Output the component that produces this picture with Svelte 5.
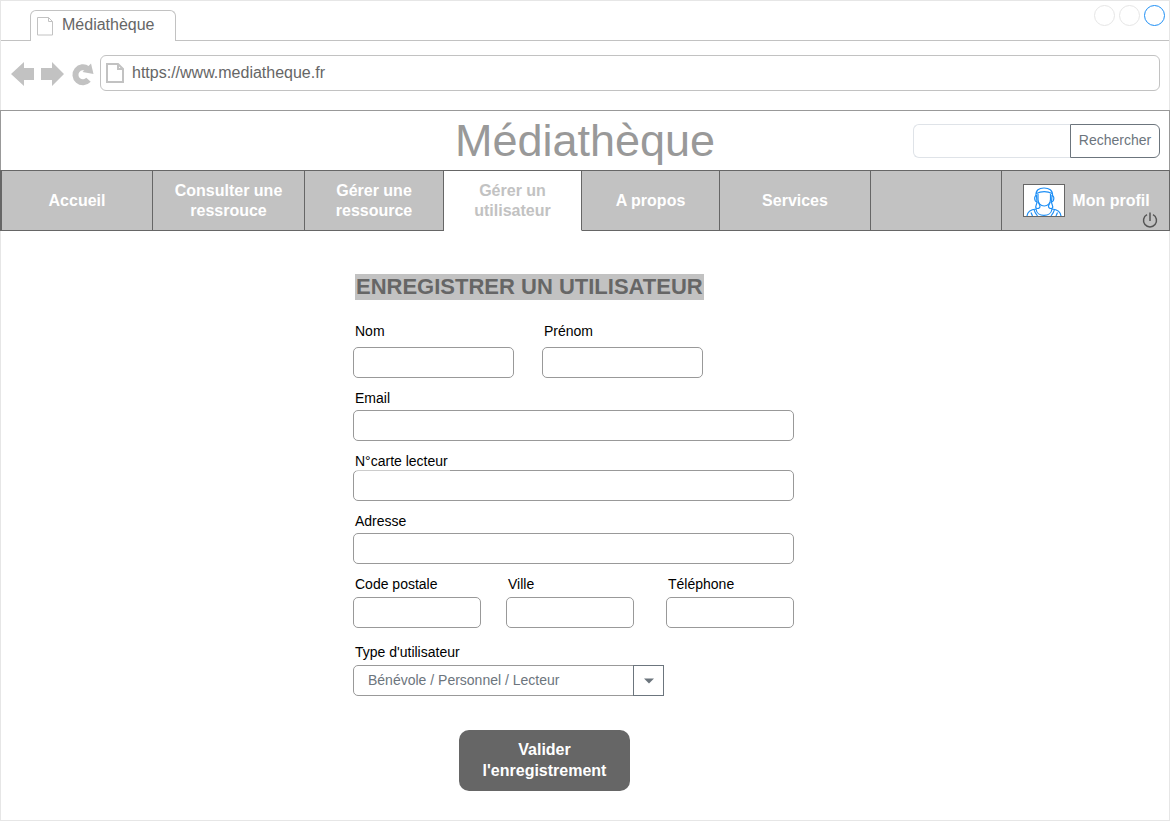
<script>
  const userTypes = ['Bénévole / Personnel / Lecteur', 'Bénévole', 'Personnel', 'Lecteur'];
</script>

<div class="window">
  <div class="tabs">
    <div class="tab">
      <svg width="16" height="20" viewBox="0 0 16 20" aria-hidden="true">
        <path d="M.5 1.5h11l4 4v13.500H.5zM11.500 1.500v4h4" />
      </svg>
      <span>Médiathèque</span>
    </div>
    <div class="controls" aria-hidden="true"><i></i><i></i><i class="active"></i></div>
  </div>

  <div class="toolbar">
    <button class="tool" aria-label="Page précédente">
      <svg width="24" height="26" viewBox="0 0 24 26"><path d="M0 13 13 1v6h10v12H13v6z" /></svg>
    </button>
    <button class="tool" aria-label="Page suivante">
      <svg width="24" height="26" viewBox="0 0 24 26"><path d="M23 13 11 1v6H0v12h11v6z" /></svg>
    </button>
    <button class="tool" aria-label="Actualiser">
      <svg width="23" height="26" viewBox="0 0 23 26">
        <path d="M16.500 7.800A7.500 7.500 0 1 0 17.500 18.800" class="arc" />
        <path d="M20 2.500 22.500 13 11.500 11z" />
      </svg>
    </button>
    <div class="address">
      <svg width="18" height="20" viewBox="0 0 18 20" aria-hidden="true">
        <path d="M1 1h11l5 5v13H1zM12 1v5h5" />
      </svg>
      <input type="text" aria-label="Adresse du site" value="https://www.mediatheque.fr" />
    </div>
  </div>

  <header>
    <h1>Médiathèque</h1>
    <form class="search" role="search">
      <input type="search" aria-label="Rechercher" />
      <button type="button">Rechercher</button>
    </form>
  </header>

  <nav>
    <a href="#accueil">Accueil</a>
    <a href="#consulter">Consulter une<br />ressrouce</a>
    <a href="#ressource">Gérer une<br />ressource</a>
    <a href="#utilisateur" class="current">Gérer un<br />utilisateur</a>
    <a href="#apropos">A propos</a>
    <a href="#services">Services</a>
    <span></span>
    <div class="profile">
      <a href="#profil">
        <svg class="avatar" width="42" height="33" viewBox="0 0 42 33" aria-hidden="true">
          <rect x=".5" y=".5" width="41" height="32" fill="#fff" stroke="#666" />
          <g fill="none" stroke="#1e8ff5" stroke-width="1.200">
            <path d="M13 12C12.500 6 16 4 21 4s9 2 8.500 8M13.500 9.500c4.500-2.500 11-2.500 15.500 0" />
            <path d="M15 10v5.500c0 3.500 2.500 6.500 6.200 6.500s6.300-3 6.300-6.500V10" />
            <path d="M13.500 11.500c-2.500 0-2.500 6 .5 6.500zM29 11.500c2.500 0 2.500 6-.5 6.500z" />
            <path d="M14 18c0 2.500-2 4-1 6 1.500 1 4 .5 4-1.500S15.500 20 15.500 18M28.500 18c0 2.500 2 4 1 6-1.500 1-4 .5-4-1.500s1.500-2.500 1.500-4.500" />
            <path d="M4 32c.5-4.500 3-6.500 9-7 1 8.500 15 8.500 16 0 6 .5 8.500 2.500 9 7" />
            <path d="M11 25.500c.5 2.500 1.500 4 3.500 6.500M31.500 25.500c-.5 2.500-1.500 4-3.500 6.500M8 28.500l1.500 3.500M34.500 28.500l-1.500 3.500" />
          </g>
        </svg>
        <span>Mon profil</span>
      </a>
      <button class="power" aria-label="Déconnexion">
        <svg width="16" height="18" viewBox="0 0 16 18">
          <path d="M5 3.700a6.500 6.500 0 1 0 6 0M8 1.500v8.500" />
        </svg>
      </button>
    </div>
  </nav>

  <main>
    <form class="register">
      <h2>ENREGISTRER UN UTILISATEUR</h2>
      <div class="names">
        <div class="field loose"><label for="nom">Nom</label><input id="nom" type="text" /></div>
        <div class="field loose"><label for="prenom">Prénom</label><input id="prenom" type="text" /></div>
      </div>
      <div class="field"><label for="email">Email</label><input id="email" type="email" /></div>
      <div class="field tight"><label for="carte">N°carte lecteur</label><input id="carte" type="text" /></div>
      <div class="field"><label for="adresse">Adresse</label><input id="adresse" type="text" /></div>
      <div class="contact">
        <div class="field medium"><label for="code">Code postale</label><input id="code" type="text" /></div>
        <div class="field medium"><label for="ville">Ville</label><input id="ville" type="text" /></div>
        <div class="field medium"><label for="tel">Téléphone</label><input id="tel" type="tel" /></div>
      </div>
      <div class="field medium type">
        <label for="type">Type d'utilisateur</label>
        <div class="select">
          <select id="type">
            {#each userTypes as userType}
              <option>{userType}</option>
            {/each}
          </select>
          <span class="arrow" aria-hidden="true">
            <svg width="10" height="6" viewBox="0 0 10 6"><path d="M0 .5h10L5 5.500z" /></svg>
          </span>
        </div>
      </div>
      <button class="submit" type="button">Valider<br />l'enregistrement</button>
    </form>
  </main>
</div>

<style>
  :global(body) {
    margin: 0;
    background: #fff;
  }
  .window,
  .window * {
    box-sizing: border-box;
  }
  .window {
    min-height: 100vh;
    border: 1px solid #e6e6e6;
    font-family: 'Liberation Sans', Arial, sans-serif;
    font-size: 14px;
    color: #000;
  }
  button,
  input,
  select {
    font: inherit;
    margin: 0;
    outline: none;
  }
  a {
    color: inherit;
    text-decoration: none;
  }
  svg {
    display: block;
    flex: none;
  }

  .tabs {
    display: flex;
    justify-content: space-between;
    height: 40px;
    padding: 0 4px 0 29px;
    border-bottom: 1px solid #c2c2c2;
  }
  .tab {
    display: flex;
    align-items: center;
    gap: 9px;
    width: 146px;
    height: 31px;
    margin-top: 9px;
    padding: 0 6px;
    border: 1px solid #c2c2c2;
    border-bottom: 0;
    border-radius: 6px 6px 0 0;
    background: #fff;
    font-size: 16px;
    line-height: 18px;
    color: #666;
  }
  .tab span {
    padding-bottom: 2px;
  }
  .tab svg,
  .address svg {
    fill: none;
    stroke: #c2c2c2;
  }
  .address svg {
    stroke-width: 2;
  }
  .controls {
    display: flex;
    gap: 4px;
    padding-top: 4px;
  }
  .controls i {
    width: 21px;
    height: 21px;
    border: 1px solid #e6e6e6;
    border-radius: 50%;
  }
  .controls .active {
    border-color: #1e8ff5;
  }

  .toolbar {
    display: flex;
    align-items: center;
    gap: 6px;
    height: 69px;
    padding: 0 9px 5px 10px;
  }
  .tool {
    padding: 2px 0 0;
    border: 0;
    background: none;
  }
  .tool svg {
    fill: #c2c2c2;
  }
  .tool .arc {
    fill: none;
    stroke: #c2c2c2;
    stroke-width: 6;
  }
  .address {
    display: flex;
    flex: 1;
    align-items: center;
    gap: 8px;
    height: 36px;
    padding: 0 5px;
    border: 1px solid #c2c2c2;
    border-radius: 6px;
  }
  .address input {
    flex: 1;
    padding: 0;
    border: 0;
    background: none;
    font-size: 16px;
    color: #666;
  }

  header {
    display: grid;
    grid-template-columns: 1fr auto 1fr;
    align-items: center;
    height: 60px;
    margin: 0 -1px;
    padding: 0 9px;
    border: 1px solid #999;
    border-bottom: 0;
  }
  h1 {
    grid-column: 2;
    margin: 0;
    font-size: 45px;
    font-weight: 400;
    line-height: 58px;
    color: #999;
  }
  .search {
    display: flex;
    justify-self: end;
    height: 34px;
  }
  .search input {
    width: 157px;
    padding: 0 8px;
    border: 1px solid #dfe3e8;
    border-right: 0;
    border-radius: 6px 0 0 6px;
    appearance: none;
  }
  .search button {
    width: 90px;
    padding: 0 0 2px;
    border: 1px solid #6c757d;
    border-radius: 0 6px 6px 0;
    background: #fff;
    color: #6c757d;
  }

  nav {
    display: grid;
    grid-template-columns: 151fr 152fr 139fr 138fr 138fr 151fr 131fr 168fr;
    height: 61px;
    margin: 0 -1px;
    border-left: 2px solid #666;
    font-size: 16px;
    font-weight: 700;
    line-height: 20px;
    text-align: center;
    color: #fff;
  }
  nav > * {
    display: flex;
    align-items: center;
    justify-content: center;
    border: solid #666;
    border-width: 1px 1px 1px 0;
    background: #c2c2c2;
  }
  nav .current {
    border-bottom-color: #fff;
    background: #fff;
    color: #c2c2c2;
  }
  .profile {
    position: relative;
    padding-left: 2px;
  }
  .profile a {
    display: flex;
    align-items: center;
    gap: 7px;
  }
  .power {
    position: absolute;
    right: 11px;
    bottom: 1px;
    padding: 0;
    border: 0;
    background: none;
  }
  .power svg {
    fill: none;
    stroke: #555;
    stroke-width: 1.5;
  }

  .register {
    display: flex;
    flex-direction: column;
    gap: 11px;
    max-width: 441px;
    margin: 43px 0 0 calc(50% - 232px);
  }
  h2 {
    align-self: flex-start;
    margin: 0 0 11px 2px;
    padding: 0 1px;
    background: #c2c2c2;
    font-size: 22px;
    line-height: 26px;
    white-space: nowrap;
    color: #666;
  }
  .names {
    display: flex;
    gap: 28px;
  }
  .names .field {
    width: 161px;
  }
  .contact {
    display: grid;
    grid-template-columns: 153fr 160fr 128fr;
  }
  .contact input {
    width: 128px;
  }
  .field {
    display: flex;
    flex-direction: column;
    gap: 3px;
  }
  .field.loose {
    gap: 7px;
  }
  .field.medium {
    gap: 4px;
  }
  .field.tight {
    gap: 0;
  }
  .field.type {
    width: 311px;
    padding-top: 4px;
  }
  label {
    padding-left: 2px;
    line-height: 18px;
  }
  .tight label {
    position: relative;
    z-index: 1;
    align-self: flex-start;
    margin-bottom: -1px;
    padding: 0 2px 1px;
    background: rgba(255, 255, 255, 0.5);
  }
  .field input {
    height: 31px;
    padding: 0 14px;
    border: 1px solid #999;
    border-radius: 5px;
    background: #fff;
  }
  .select {
    display: grid;
    grid-template-columns: 1fr 31px;
    height: 31px;
  }
  select {
    grid-area: 1 / 1 / 2 / 3;
    padding: 0 40px 2px 14px;
    border: 1px solid #999;
    border-radius: 5px 0 0 5px;
    background: #fff;
    color: #6c757d;
    appearance: none;
  }
  .arrow {
    grid-area: 1 / 2;
    display: flex;
    align-items: center;
    justify-content: center;
    border: 1px solid #6c757d;
    pointer-events: none;
  }
  .arrow svg {
    fill: #6c757d;
  }
  .submit {
    width: 171px;
    height: 61px;
    margin: 23px 0 20px 106px;
    padding: 0 0 2px;
    border: 0;
    border-radius: 10px;
    background: #666;
    font-size: 16px;
    font-weight: 700;
    line-height: 21px;
    color: #fff;
  }
</style>
